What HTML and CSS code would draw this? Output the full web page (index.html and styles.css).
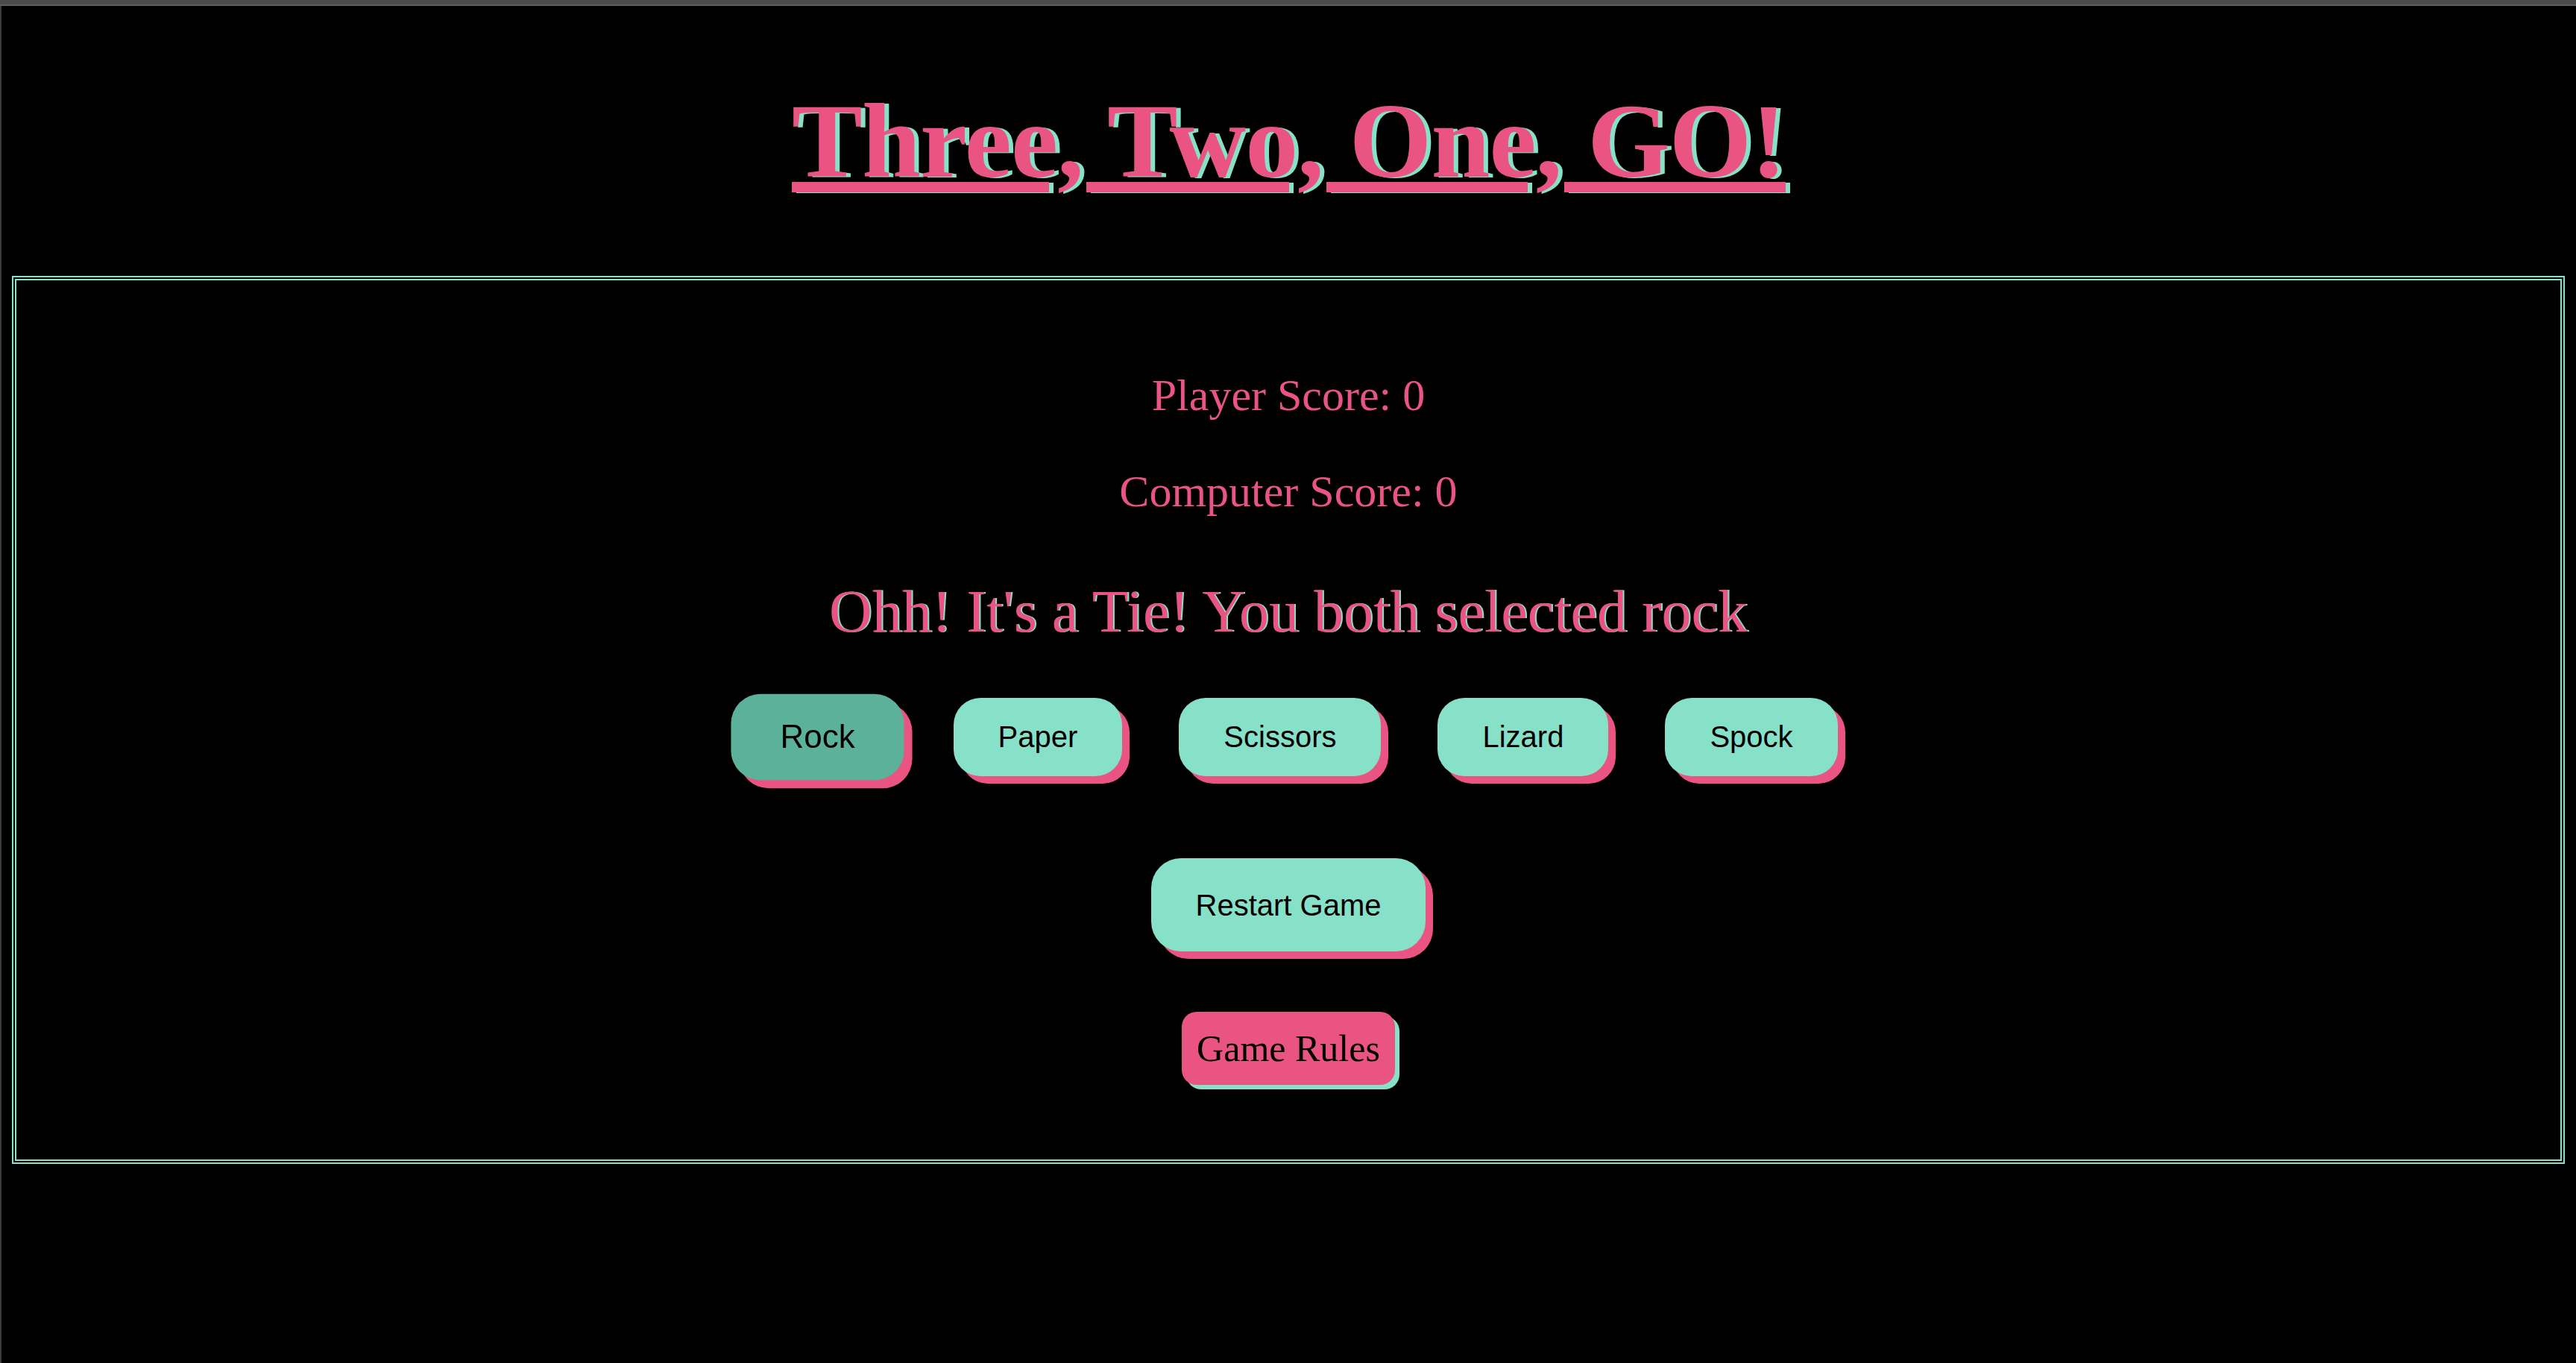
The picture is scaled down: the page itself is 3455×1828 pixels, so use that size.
FILE: index.html
```html
<!DOCTYPE html>
<html lang="en">
<head>
<meta charset="utf-8">
<title>Three, Two, One, GO!</title>
<link rel="stylesheet" href="styles.css">
</head>
<body>
<div class="chrome"></div>
<div class="page">
  <h1 class="title">Three, Two, One, GO!</h1>
  <main class="board">
    <p class="score">Player Score: 0</p>
    <p class="score">Computer Score: 0</p>
    <h2 class="result">Ohh! It's a Tie! You both selected rock</h2>
    <div class="choices">
      <button class="choice choice-active">Rock</button>
      <button class="choice">Paper</button>
      <button class="choice">Scissors</button>
      <button class="choice">Lizard</button>
      <button class="choice">Spock</button>
    </div>
    <button class="choice restart">Restart Game</button>
    <button class="rules">Game Rules</button>
  </main>
</div>
</body>
</html>
```

FILE: styles.css
```css
html, body {
  margin: 0;
  padding: 0;
  background: #000;
  height: 100%;
}

body {
  font-family: "Liberation Serif", "Times New Roman", serif;
  color: #ea5483;
  overflow: hidden;
}

.chrome {
  height: 6px;
  background: #4b4b4b;
  border-bottom: 2px solid #5c5c5c;
}

.page {
  border-left: 2px solid #3b3b3b;
  height: calc(100% - 8px);
  box-sizing: border-box;
  padding-top: 100px;
}

.title {
  margin: 0 0 99px 0;
  text-align: center;
  font-size: 142px;
  line-height: 163px;
  font-weight: bold;
  letter-spacing: -0.8px;
  color: #ea5483;
  text-decoration: underline;
  text-decoration-thickness: 14px;
  text-underline-offset: 7px;
  text-shadow: 6px 1px 0 #87e0c8;
}

.board {
  margin: 0 15px 0 14px;
  border: 6px double #87e0c8;
  padding: 120px 0 100px;
  display: flex;
  flex-direction: column;
  align-items: center;
}

.score {
  margin: 0 0 60px 0;
  font-size: 60px;
  line-height: 69px;
}

.result {
  margin: 20px 0 70px 0;
  font-size: 80px;
  line-height: 92px;
  font-weight: normal;
  text-shadow: 2px 0 0 #87e0c8;
}

.choices {
  display: flex;
  gap: 76px;
  margin-bottom: 110px;
}

.choice {
  font-family: "Liberation Sans", Arial, sans-serif;
  font-size: 40px;
  line-height: 46px;
  color: #000;
  background: #87e0c8;
  border: none;
  border-radius: 36px;
  padding: 29px 60px 30px;
  box-shadow: 10px 10px 0 #ea5483;
}

.choice-active {
  background: #5bb199;
  transform: scale(1.1);
}

.restart {
  padding: 40px 60px 39px;
  border-radius: 40px;
  margin-bottom: 81px;
}

.rules {
  font-family: "Liberation Serif", "Times New Roman", serif;
  font-size: 50px;
  line-height: 58px;
  color: #000;
  background: #ea5483;
  border: none;
  border-radius: 20px;
  padding: 20px 20px;
  box-shadow: 6px 6px 0 #87e0c8;
}
```
